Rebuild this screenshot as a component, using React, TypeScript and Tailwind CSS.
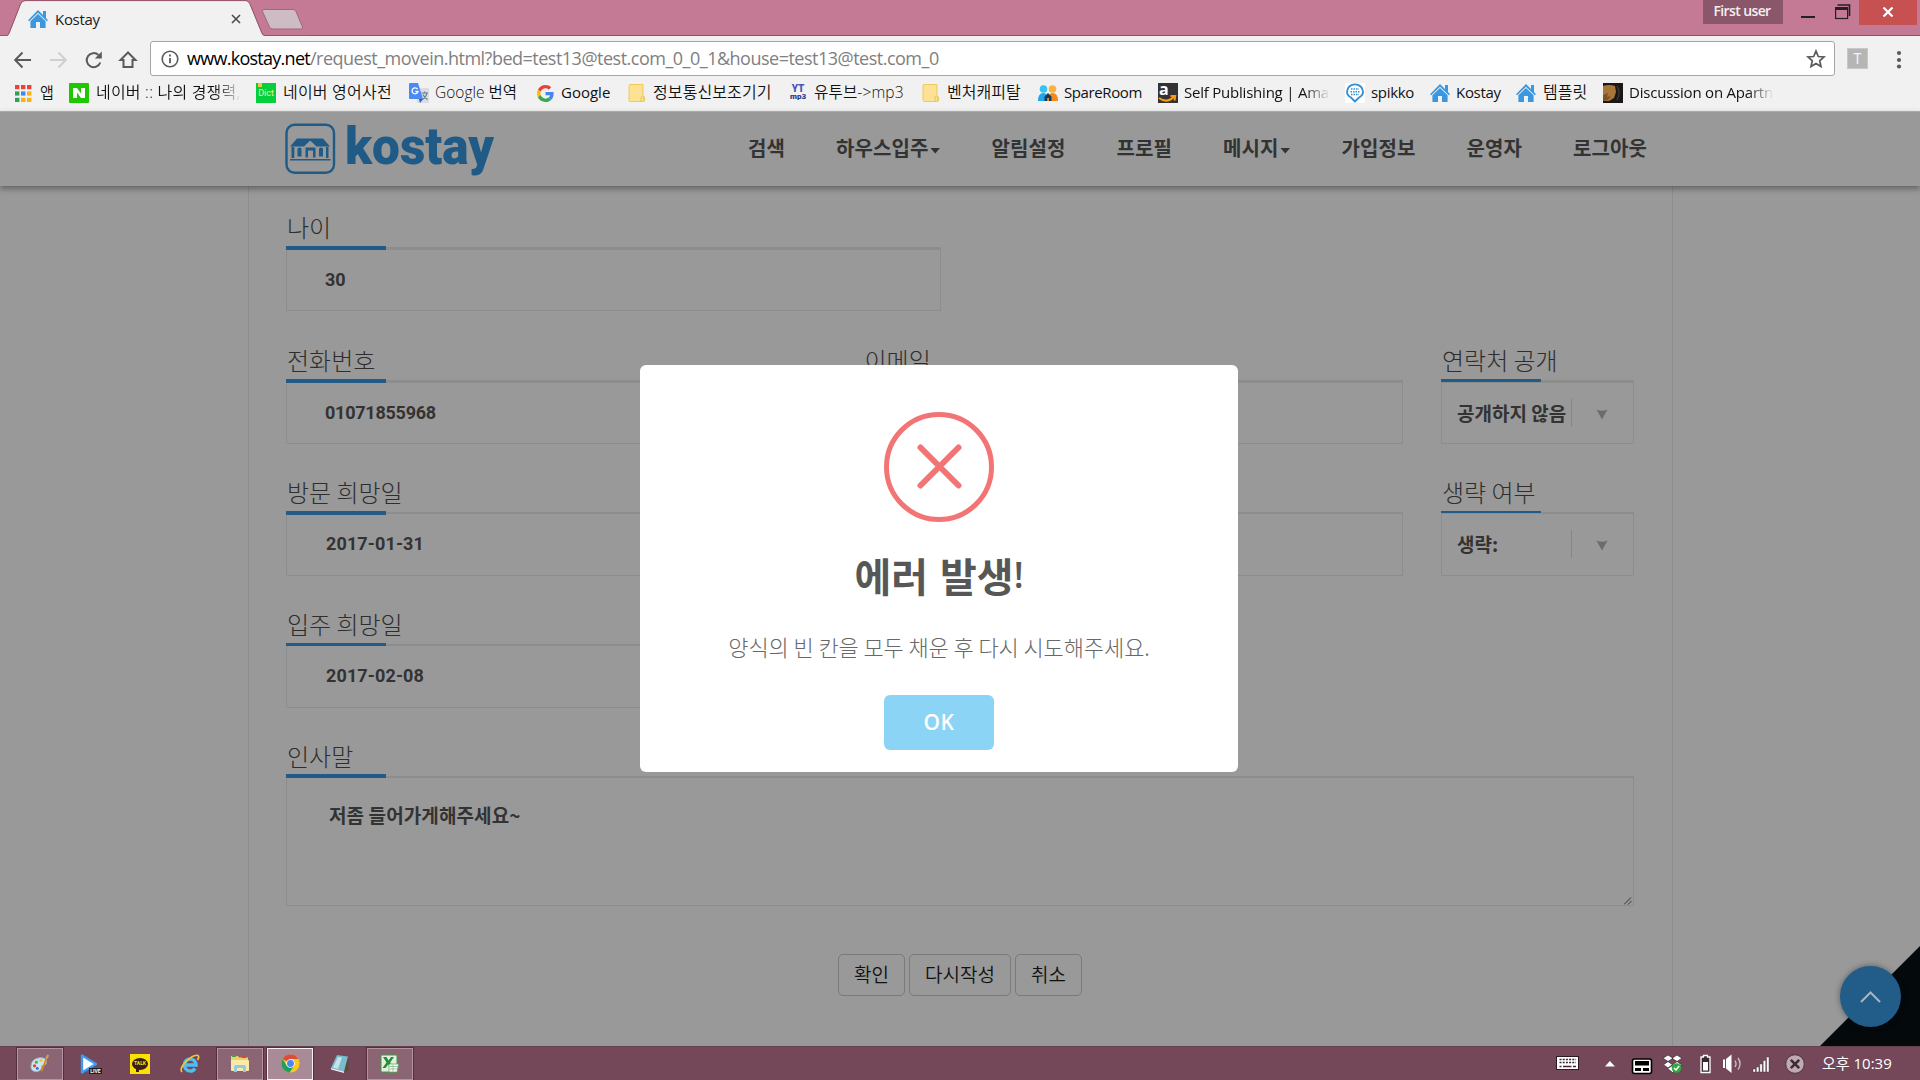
import type { ReactNode } from "react";

const LATIN = "font-['Open_Sans','Noto_Sans_CJK_KR',sans-serif]";
const KOREAN = "font-['Noto_Sans_CJK_KR',sans-serif]";

function House() {
  return (
    <svg width="20" height="18" viewBox="0 0 20 18" fill="#3b97e0" className="shrink-0">
      <path d="M10 0 L15 5 V1 H18 V8 L20 10.2 L18.8 11.2 L10 2.8 L1.2 11.2 L0 10.2 Z" />
      <path d="M10 4 L17.6 11.2 V18 H12 V12 H8 V18 H2.4 V11.2 Z" />
    </svg>
  );
}

function Folder() {
  return (
    <svg width="17" height="18" viewBox="0 0 17 18" className="shrink-0">
      <path d="M1 1.5 Q1 0.5 2 0.5 H15 V12 L16.5 13 V16.5 Q16.5 17.5 15 17.5 H2 Q1 17.5 1 16.5 Z" fill="#fde293" stroke="#efc95f" />
      <path d="M13 17 V13 Q15 11 16 13 V17" fill="#fbe08a" stroke="#e8bd4b" strokeWidth=".8" />
    </svg>
  );
}

function AppsIcon() {
  const c = ["#ea4335", "#ea4335", "#ea4335", "#34a056", "#4285f4", "#f9b213", "#34a056", "#f9b213", "#f9b213"];
  return (
    <svg width="17" height="17" className="shrink-0">
      {c.map((f, i) => (
        <rect key={i} x={(i % 3) * 6} y={Math.floor(i / 3) * 6.4} width="4.4" height="4.2" fill={f} />
      ))}
    </svg>
  );
}

function NaverIcon() {
  return (
    <svg width="20" height="20" className="shrink-0">
      <rect width="20" height="20" rx="1" fill="#1ec800" />
      <path d="M4 5 H8 L12 10.5 V5 H16 V15 H12 L8 9.5 V15 H4 Z" fill="#fff" />
    </svg>
  );
}

function DictIcon() {
  return (
    <span className="relative flex h-5 w-5 shrink-0 items-center justify-center bg-[#04cf3c] font-['Roboto'] text-[9px] leading-none text-[#e8f59a]">
      <i className="absolute left-[2px] top-0 h-1 w-1 bg-[#f5c43c]" />
      Dict
    </span>
  );
}

function TranslateIcon() {
  return (
    <svg width="20" height="20" viewBox="0 0 20 20" className="shrink-0">
      <rect x="8" y="5" width="12" height="15" rx="1" fill="#d9dce0" />
      <path d="M1 0 H9 L14 16 H1 Q0 16 0 15 V1 Q0 0 1 0 Z" fill="#4a8af4" />
      <path d="M10 16 H14 L11 20 Z" fill="#3256b5" />
      <path d="M8.500 6 A3 3 0 1 0 9 8.500 H6.300" fill="none" stroke="#fff" strokeWidth="1.3" />
      <path d="M12.500 10 H19 M15.700 8.500 V10 M18 10 Q17 14.500 13.500 16.500 M14 11.500 Q15.500 15 18.500 16.500" fill="none" stroke="#66788a" strokeWidth="1.1" />
    </svg>
  );
}

function GoogleIcon() {
  return (
    <svg width="17" height="17" viewBox="0 0 48 48" className="shrink-0">
      <path fill="#EA4335" d="M24 9.5c3.54 0 6.71 1.22 9.21 3.6l6.85-6.85C35.9 2.38 30.47 0 24 0 14.62 0 6.51 5.38 2.56 13.22l7.98 6.19C12.43 13.72 17.74 9.5 24 9.5z" />
      <path fill="#4285F4" d="M46.98 24.55c0-1.57-.15-3.09-.38-4.55H24v9.02h12.94c-.58 2.96-2.26 5.48-4.78 7.18l7.73 6c4.51-4.18 7.09-10.36 7.09-17.65z" />
      <path fill="#FBBC05" d="M10.53 28.59A14.5 14.5 0 0 1 9.77 24c0-1.6.27-3.14.76-4.59l-7.98-6.19A23.9 23.9 0 0 0 0 24c0 3.88.92 7.54 2.56 10.78l7.97-6.19z" />
      <path fill="#34A853" d="M24 48c6.48 0 11.93-2.13 15.89-5.81l-7.73-6c-2.15 1.45-4.92 2.3-8.16 2.3-6.26 0-11.57-4.22-13.47-9.91l-7.98 6.19C6.51 42.62 14.62 48 24 48z" />
    </svg>
  );
}

function YtIcon() {
  return (
    <span className="flex w-[18px] shrink-0 flex-col items-center font-['Roboto'] font-bold leading-[8px] text-[#4458b8]">
      <b className="text-[10px]">YT</b>
      <b className="text-[8px] text-[#2b3a8c]">mp3</b>
    </span>
  );
}

function PeopleIcon() {
  return (
    <svg width="20" height="16" viewBox="0 0 20 16" className="shrink-0">
      <circle cx="5.5" cy="4" r="3.8" fill="#35c3f3" />
      <path d="M0 16 Q0 8 5.500 8 Q10 8 10 16 Z" fill="#1fa7e6" />
      <circle cx="14.5" cy="4" r="3.8" fill="#fbb040" />
      <path d="M10 16 Q10 8 14.500 8 Q20 8 20 16 Z" fill="#f08a1c" />
      <path d="M6.500 16 V11.500 L10 8 L13.500 11.500 V16 H11 V13 H9 V16 Z" fill="#123c66" />
    </svg>
  );
}

function AmazonIcon() {
  return (
    <span className="relative flex h-5 w-5 shrink-0 items-start justify-start bg-[#333] pl-[1px] font-['Open_Sans'] text-[16px] font-bold leading-[12px] text-white">
      a
      <svg width="20" height="20" className="absolute left-0 top-0">
        <path d="M1 15 Q9 21 16 13.500 M12.500 13 H17.200 L16.500 17.500" fill="none" stroke="#f79a1c" strokeWidth="2" />
      </svg>
    </span>
  );
}

function SpikkoIcon() {
  return (
    <svg width="20" height="20" className="shrink-0">
      <rect width="20" height="20" fill="#fff" />
      <path d="M10 18.500 L6 14.500 Q2 12.500 2 8.700 A8 7.400 0 0 1 18 8.700 Q18 12.500 14 14.500 Z" fill="#fff" stroke="#2f8fd0" strokeWidth="1.8" />
      <path d="M6 6 H14 M5.500 8.700 H14.500 M6 11.400 H14" stroke="#2f8fd0" strokeWidth="1.5" strokeDasharray="1.5 1" />
    </svg>
  );
}

function DiscussionIcon() {
  return (
    <svg width="20" height="20" className="shrink-0">
      <rect width="20" height="20" fill="#1b1715" />
      <path d="M0 3 Q6 1 12 3 L13 9 L11 15 L6 18 H0 Z" fill="#a87638" />
      <path d="M0 12 L5 10 L4 14 L8 13 L5 17 L0 18 Z" fill="#7d5224" />
      <path d="M14 3 Q18 9 14 17" fill="none" stroke="#3c3836" strokeWidth="1.5" />
    </svg>
  );
}

const FADE = "[mask-image:linear-gradient(to_right,#000_82%,transparent)]";

const bookmarks: { icon: ReactNode; label: string; cls: string; box: string; gap: string }[] = [
  { icon: <AppsIcon />, label: "앱", cls: "text-[15px] font-[350]", box: "w-[54px]", gap: "gap-[8px]" },
  { icon: <NaverIcon />, label: "네이버 :: 나의 경쟁력,", cls: `text-[16px] font-[350] tracking-[0.2px] w-[146px] overflow-hidden ${FADE}`, box: "w-[187px]", gap: "gap-[7px]" },
  { icon: <DictIcon />, label: "네이버 영어사전", cls: "text-[16px] font-[350] tracking-[0.2px]", box: "w-[153px]", gap: "gap-[7px]" },
  { icon: <TranslateIcon />, label: "Google 번역", cls: "text-[15.5px] font-[350]", box: "w-[128px]", gap: "gap-[6px]" },
  { icon: <GoogleIcon />, label: "Google", cls: "text-[15px]", box: "w-[91px]", gap: "gap-[7px]" },
  { icon: <Folder />, label: "정보통신보조기기", cls: "text-[16px] font-[350] tracking-[0.1px]", box: "w-[161px]", gap: "gap-[8px]" },
  { icon: <YtIcon />, label: "유투브->mp3", cls: "text-[15.6px] font-[350] tracking-[0.1px]", box: "w-[133px]", gap: "gap-[7px]" },
  { icon: <Folder />, label: "벤처캐피탈", cls: "text-[16px] font-[350]", box: "w-[116px]", gap: "gap-[8px]" },
  { icon: <PeopleIcon />, label: "SpareRoom", cls: "text-[15px] tracking-[-0.39px]", box: "w-[120px]", gap: "gap-[6px]" },
  { icon: <AmazonIcon />, label: "Self Publishing | Ama", cls: `text-[15px] tracking-[-0.22px] w-[146px] overflow-hidden ${FADE}`, box: "w-[187px]", gap: "gap-[6px]" },
  { icon: <SpikkoIcon />, label: "spikko", cls: "text-[15px] tracking-[-0.32px]", box: "w-[85px]", gap: "gap-[6px]" },
  { icon: <House />, label: "Kostay", cls: "text-[15px] tracking-[-0.3px]", box: "w-[86px]", gap: "gap-[6px]" },
  { icon: <House />, label: "템플릿", cls: "text-[16px] font-[350]", box: "w-[87px]", gap: "gap-[7px]" },
  { icon: <DiscussionIcon />, label: "Discussion on Apartn", cls: `text-[15px] tracking-[-0.21px] w-[145px] overflow-hidden ${FADE}`, box: "w-[171px]", gap: "gap-[6px]" },
];

function TitleBar() {
  return (
    <div className="flex h-9 items-start bg-[#c47a95] shadow-[inset_0_-1px_0_#8b5068]">
      <div className="relative h-9 w-[310px]">
        <svg width="310" height="36" className="absolute left-0 top-0">
          <path d="M7 36 Q9 35 10 32 L21 4 Q22.500 1 25 1 H246 Q248.500 1 249.500 4 L261 32 Q262 35.500 265 36 Z" fill="#f1f1f1" />
          <path d="M0 35.500 H7 Q8.500 35 9.500 32 L20.500 4 Q22 .6 25 .6 H246 Q248.500 .6 250 4 L261.500 32 Q262.500 35.500 265 35.500 H310" fill="none" stroke="#93566e" />
          <path d="M264 9.500 H293 Q295 9.500 296 11.500 L302.500 27 Q303 29 301 29 H273 Q270.500 29 269.500 27 L262.500 11.500 Q262 9.500 264 9.500 Z" fill="#cdbcc4" stroke="#a3667f" />
        </svg>
        <div className="relative flex h-9 items-center pb-[2px] pl-7 pt-[3px]">
          <House />
          <span className={`ml-[7px] w-[176px] text-[15px] leading-[22px] tracking-[-0.3px] text-[#1c1c1c] ${LATIN}`}>Kostay</span>
          <svg width="10" height="10">
            <path d="M1 1 L9 9 M9 1 L1 9" stroke="#4a4a4a" strokeWidth="1.6" />
          </svg>
        </div>
      </div>
      <div className="flex-1" />
      <div className={`flex h-6 w-20 items-center justify-center bg-[#8a576a] pb-[3px] pr-[2px] text-[14px] font-semibold leading-[20px] tracking-[-0.62px] text-[#f5eef1] ${LATIN}`}>First user</div>
      <svg width="76" height="26">
        <rect x="18" y="16" width="14" height="2" fill="#222" />
        <path d="M54.500 5 H66.500 V16" fill="none" stroke="#222" strokeWidth="1.600" />
        <rect x="52.600" y="8" width="12" height="10.500" fill="none" stroke="#222" strokeWidth="1.200" />
        <rect x="52" y="7" width="13" height="3" fill="#222" />
      </svg>
      <div className="mr-[3px] flex h-[25px] w-[58px] items-center justify-center bg-[#c75050] pb-[2px]">
        <svg width="12" height="10">
          <path d="M1.500 .5 L10.500 9.500 M10.500 .5 L1.500 9.500" stroke="#fff" strokeWidth="2.200" />
        </svg>
      </div>
    </div>
  );
}

function Toolbar() {
  return (
    <div className="flex h-[46px] items-center bg-[#f1f1f1] pb-[1px]">
      <svg width="150" height="34" fill="none" stroke="#5a5a5a" strokeWidth="2" className="shrink-0">
        <path d="M31 18 H16 M22.500 10.500 L15.200 18 L22.500 25.500" />
        <path d="M50 18 H65 M58.500 10.500 L65.800 18 L58.500 25.500" stroke="#cfcfcf" />
        <path d="M100.300 20.500 A7 7 0 1 1 98.500 13" />
        <path d="M101.800 9.500 V16.500 H94.800 Z" fill="#5a5a5a" stroke="none" />
        <path d="M128 10.500 L120.500 18 H123.500 V25 H132.500 V18 H135.500 Z" />
      </svg>
      <div className="flex h-[35px] w-[1685px] shrink-0 items-center rounded-[3px] border border-[#a6a6a6] bg-white pl-[10px]">
        <svg width="18" height="18" fill="none" stroke="#5a5a5a" strokeWidth="1.600" className="shrink-0">
          <circle cx="9" cy="9" r="7.800" />
          <path d="M9 8 V13.200 M9 4.600 V6.400" strokeWidth="1.800" />
        </svg>
        <div className={`ml-[8px] flex-1 whitespace-nowrap pb-[1px] text-[18px] leading-[30px] text-[#808080] ${LATIN}`}>
          <span className="tracking-[-0.73px] text-black">www.kostay.net</span>
          <span className="tracking-[-0.5px]">/request_movein.html?bed=test13@test.com_0_0_1&amp;house=test13@test.com_0</span>
        </div>
        <svg width="20" height="20" viewBox="0 0 20 20" fill="none" stroke="#5a5a5a" strokeWidth="1.700" className="mr-[8px]">
          <path d="M10 2 L12.300 7.500 L18 8 L13.700 11.800 L15 17.500 L10 14.500 L5 17.500 L6.300 11.800 L2 8 L7.700 7.500 Z" />
        </svg>
      </div>
      <div className="ml-[12px] flex h-[21px] w-[21px] items-center justify-center border border-[#c8c8c8] bg-[#b5b5b5] font-['Roboto'] text-[14px] leading-none text-[#f4f4f4]">T</div>
      <svg width="6" height="20" className="ml-[28px] mt-[2px]" fill="#5a5a5a">
        <circle cx="3" cy="3" r="2.100" />
        <circle cx="3" cy="10" r="2.100" />
        <circle cx="3" cy="16.500" r="2.100" />
      </svg>
    </div>
  );
}

function Bookmarks() {
  return (
    <div className="flex h-[29px] items-center bg-[#f1f1f1] pb-[7px] pl-[15px]">
      {bookmarks.map((b, i) => (
        <div key={i} className={`flex h-[22px] shrink-0 items-center ${b.gap} ${b.box}`}>
          {b.icon}
          <span className={`mb-[2px] whitespace-nowrap leading-[22px] text-[#111] ${LATIN} ${b.cls}`}>{b.label}</span>
        </div>
      ))}
    </div>
  );
}

function Logo() {
  return (
    <svg width="212" height="52" viewBox="0 0 212 52" fill="#205b87" className="overflow-visible">
      <rect x="1.500" y="1.800" width="47.500" height="48" rx="8" fill="none" stroke="#205b87" strokeWidth="2.400" />
      <path d="M12 15.500 H38 L45 23.500 H31.500 L25.200 17.500 L19 23.500 H5 Z" />
      <path d="M6.500 24 H9.300 V35 H6.500 Z M41 24 H43.500 V35 H41 Z M5 36 H45.500 V37.500 H5 Z" />
      <path d="M12.500 25.500 Q14.500 23.500 16.500 25.500 V33.500 H12.500 Z M34 25.500 Q36 23.500 38 25.500 V33.500 H34 Z" />
      <path d="M20.500 34.500 V24.500 H30.500 V34.500 H28 V27.500 H23 V34.500 Z" />
      <text x="60" y="41" textLength="149" lengthAdjust="spacingAndGlyphs" className="font-['Roboto'] text-[52px] font-black">kostay</text>
    </svg>
  );
}

function Caret() {
  return (
    <svg width="11" height="6" className="ml-[1px] mt-[6px]">
      <path d="M.5 0 H10 L5.250 5.500 Z" fill="#333" />
    </svg>
  );
}

function Header() {
  const items = ["검색", "하우스입주", "알림설정", "프로필", "메시지", "가입정보", "운영자", "로그아웃"];
  return (
    <header className="relative z-10 flex h-[75px] shrink-0 items-start border-t border-[#a9a9a9] bg-[#999] pl-[285px] pt-[11px] shadow-[0_3px_6px_rgba(0,0,0,0.35)]">
      <Logo />
      <nav className={`ml-[251px] mt-[10px] flex h-[30px] items-center gap-[51px] text-[20px] font-bold leading-[30px] tracking-[0.1px] text-[#333] ${KOREAN}`}>
        {items.map((t) => (
          <span key={t} className="flex items-center whitespace-nowrap">
            {t}
            {(t === "하우스입주" || t === "메시지") && <Caret />}
          </span>
        ))}
      </nav>
    </header>
  );
}

function Field({ label, box, bar = "h-1", children }: { label: string; box: string; bar?: string; children?: ReactNode }) {
  return (
    <div>
      <div className={`h-8 pl-[1px] text-[24px] font-light leading-[24px] text-[#2e2e2e] ${KOREAN}`}>{label}</div>
      <div className={`relative border border-[#8d8d8d] ${box}`}>
        <div className={`absolute -left-px w-[100px] bg-[#225b87] ${bar}`} />
        {children}
      </div>
    </div>
  );
}

const VALUE = "text-[18px] font-bold leading-[24px] text-[#333] font-['Roboto','Noto_Sans_CJK_KR',sans-serif]";
const TALL = "h-16 border-t-3";
const SLIM = "h-16 border-t-2";

function SelectValue({ text }: { text: string }) {
  return (
    <div className="flex h-[60px] items-center pl-[15px]">
      <span className={`w-[114px] whitespace-nowrap pb-[1px] text-[19px] font-bold leading-[28px] text-[#333] ${KOREAN}`}>{text}</span>
      <span className="h-7 w-px bg-[#868686]" />
      <svg width="12" height="11" className="ml-[24px] mt-[3px]">
        <path d="M.5 .5 Q6 3 11.500 .5 L6 10.500 Z" fill="#6c6c6c" />
      </svg>
    </div>
  );
}

function ActionButton({ text, w }: { text: string; w: string }) {
  return (
    <button className={`h-[42px] rounded-[5px] border border-[#7a7a7a] pb-[1px] text-[19px] font-[350] text-[#111] ${KOREAN} ${w}`}>{text}</button>
  );
}

function FormPage() {
  return (
    <main className="flex-1 bg-[#999]">
      <div className="ml-[248px] h-full w-[1425px] border-x border-[#8d8d8d] pl-[37px] pt-[29px]">
        <Field label="나이" box={`w-[655px] ${TALL}`} bar="-top-1 h-1">
          <div className={`pl-[38px] pt-[18px] ${VALUE}`}>30</div>
        </Field>
        <div className="mt-[37px] flex gap-[38px]">
          <Field label="전화번호" box={`w-[539.500px] ${TALL}`} bar="-top-1 h-1">
            <div className={`pl-[38px] pt-[18px] tracking-[-0.24px] ${VALUE}`}>01071855968</div>
          </Field>
          <Field label="이메일" box={`w-[539.500px] ${TALL}`} bar="-top-1 h-1" />
          <Field label="연락처 공개" box={`w-[193px] ${TALL}`} bar="-top-1 h-[3px]">
            <SelectValue text="공개하지 않음" />
          </Field>
        </div>
        <div className="mt-9 flex gap-[38px]">
          <Field label="방문 희망일" box={`w-[539.500px] ${SLIM}`} bar="-top-[3px] h-1">
            <div className={`pl-[39px] pt-[18px] tracking-[0.12px] ${VALUE}`}>2017-01-31</div>
          </Field>
          <Field label="방문 시간" box={`w-[539.500px] ${SLIM}`} bar="-top-[3px] h-1" />
          <Field label="생략 여부" box={`w-[193px] ${SLIM}`} bar="-top-[3px] h-[2px]">
            <SelectValue text="생략:" />
          </Field>
        </div>
        <div className="mt-9 w-[539px]">
          <Field label="입주 희망일" box={SLIM} bar="-top-[3px] h-[3px]">
            <div className={`pl-[39px] pt-[18px] tracking-[0.12px] ${VALUE}`}>2017-02-08</div>
          </Field>
        </div>
        <div className="mt-9">
          <Field label="인사말" box="h-[130px] w-[1348px] border-t-2" bar="-top-1 h-1">
            <div className={`pl-[42px] pt-[23px] text-[19px] font-bold leading-[28px] tracking-[0.1px] text-[#333] ${KOREAN}`}>저좀 들어가게해주세요~</div>
            <svg width="8" height="8" className="absolute bottom-0 right-[1px]">
              <path d="M0 7.500 L7 .5 M4 7.500 L7.500 4" stroke="#333" strokeWidth="1" />
            </svg>
          </Field>
        </div>
        <div className="ml-[552px] mt-12 flex gap-1">
          <ActionButton text="확인" w="w-[67px]" />
          <ActionButton text="다시작성" w="w-[102px]" />
          <ActionButton text="취소" w="w-[67px]" />
        </div>
      </div>
    </main>
  );
}

function Modal() {
  return (
    <div className="absolute left-[640px] top-[365px] z-20 flex h-[407px] w-[598px] flex-col items-center rounded-[6px] bg-white pt-[47px]">
      <svg width="110" height="110" fill="none" stroke="#f27474" strokeWidth="5">
        <circle cx="55" cy="55" r="52.500" />
        <path d="M36.500 35.500 L74.500 73.500 M74.500 35.500 L36.500 73.500" strokeWidth="6" strokeLinecap="round" />
      </svg>
      <h2 className={`mt-[28px] flex text-[40px] font-bold leading-[50px] text-[#575757] ${KOREAN}`}>
        <span className="[word-spacing:3px]">에러 발생</span>
        <span className="font-['Open_Sans'] text-[36px] font-semibold">!</span>
      </h2>
      <p className={`mt-[31px] whitespace-nowrap text-[22px] font-light leading-[30px] tracking-[-0.1px] text-[#686868] ${KOREAN}`}>
        양식의 빈 칸을 모두 채운 후 다시 시도해주세요.
      </p>
      <button className={`mt-[34px] h-[55px] w-[110px] rounded-[6px] bg-[#8cd4f5] text-[21px] font-semibold tracking-[0.5px] text-white ${LATIN}`}>OK</button>
    </div>
  );
}

function CornerTop() {
  return (
    <div className="absolute left-[1820px] top-[946px] h-[100px] w-[100px]">
      <svg width="100" height="100" className="absolute left-0 top-0">
        <path d="M0 100 L100 0 V100 Z" fill="#04090c" />
      </svg>
      <div className="absolute left-5 top-5 flex h-[61px] w-[61px] items-center justify-center rounded-full bg-[#225c88] shadow-[0_0_6px_rgba(0,0,0,0.4)]">
        <svg width="21" height="12" fill="none" stroke="#b0b4b7" strokeWidth="2">
          <path d="M1 11 L10.500 1.500 L20 11" />
        </svg>
      </div>
    </div>
  );
}

function TaskButton({ children, state = "idle" }: { children: ReactNode; state?: "idle" | "open" | "active" }) {
  const look = {
    idle: "border-transparent",
    open: "border-[#b294a1] bg-[#8b6574] outline outline-[#54303e]",
    active: "border-[#f6f0f3] bg-[#a98a97] outline outline-[#54303e]",
  }[state];
  return <div className={`flex h-8 w-[46px] items-center justify-center border ${look}`}>{children}</div>;
}

function Taskbar() {
  return (
    <footer className="relative z-10 flex h-[34px] shrink-0 items-center border-t border-[#65404e] bg-[#744858] pl-[17px]">
      <div className="flex gap-1">
        <TaskButton state="open">
          <svg width="20" height="20" viewBox="0 0 22 20">
            <path d="M1 13 Q1 4 11 3 Q19 3 18 9 Q17 12 13 12 Q13 18 7 18.500 Q1 18 1 13 Z" fill="#cfe4f1" stroke="#8fb3c9" />
            <circle cx="5" cy="12" r="1.800" fill="#d9453b" />
            <circle cx="7" cy="8" r="1.800" fill="#5bb14c" />
            <circle cx="12" cy="6" r="1.800" fill="#f0c430" />
            <circle cx="8" cy="15" r="1.600" fill="#3a6fd0" />
            <path d="M18.500 3 L12.500 18" stroke="#d98628" strokeWidth="2" />
            <path d="M20 0 L18 4" stroke="#c79a6a" strokeWidth="2.600" />
          </svg>
        </TaskButton>
        <TaskButton>
          <div className="relative h-5 w-[21px]">
            <svg width="18" height="20">
              <path d="M2 1.500 L16 10 L2 18.500 Z" fill="#fff" stroke="#3b9bf0" strokeWidth="2.400" strokeLinejoin="round" />
            </svg>
            <span className="absolute -right-[1px] bottom-0 bg-[#222] px-[1px] font-['Roboto'] text-[5px] font-bold leading-[6px] text-white">LIVE</span>
          </div>
        </TaskButton>
        <TaskButton>
          <div className="flex h-5 w-5 items-center justify-center bg-[#fae100]">
            <div className="relative flex h-3 w-4 items-center justify-center rounded-[50%] bg-[#3b1e1e] font-['Roboto'] text-[5px] font-bold leading-none text-[#fae100]">
              <i className="absolute -bottom-[2px] left-1 h-1 w-[3px] bg-[#3b1e1e]" />
              TALK
            </div>
          </div>
        </TaskButton>
        <TaskButton>
          <svg width="20" height="20" viewBox="0 0 20 20" fill="none">
            <path d="M4.500 11 H16 A5.800 6 0 1 0 15 14.500" stroke="#4cc0f2" strokeWidth="3.400" />
            <path d="M2 18 Q-1 15 6 7.500 Q14 0 18 1.500 Q19.500 3 17.500 6" stroke="#f4c43a" strokeWidth="1.700" />
          </svg>
        </TaskButton>
        <TaskButton state="open">
          <svg width="20" height="19">
            <path d="M1 2 H8 L9 3.500 H18 V16 H1 Z" fill="#f0cf6a" />
            <rect x="2" y="1" width="4" height="2" fill="#3ea24b" />
            <rect x="12" y="2" width="4" height="2" fill="#d9453b" />
            <rect x="1" y="6" width="18" height="11" rx="1" fill="#fbeaa6" />
            <path d="M4 18 V12.500 Q4 11 6 11 H14 Q16 11 16 12.500 V18 H13 V14 H7 V18 Z" fill="#8fcbea" />
          </svg>
        </TaskButton>
        <TaskButton state="active">
          <svg width="19" height="19" viewBox="0 0 48 48">
            <circle cx="24" cy="24" r="23" fill="#fbc91d" />
            <path d="M24 24 L4.100 12.500 A23 23 0 0 1 43.900 12.500 H24 Z" fill="#dd4b3e" />
            <path d="M4.100 12.500 A23 23 0 0 0 22 47 L33 29.500 L24 24 L14 29 Z" fill="#1da05d" />
            <circle cx="24" cy="24" r="11" fill="#fff" />
            <circle cx="24" cy="24" r="8.700" fill="#4688f1" />
          </svg>
        </TaskButton>
        <TaskButton>
          <svg width="20" height="19">
            <path d="M6 1 L18 2 L19 16 L16 18 Z" fill="#5b4a3c" />
            <path d="M7 1 L18 2.500 L14 17.500 L1 14 Z" fill="#79bccb" />
            <path d="M8 3 L12 3.500 L8 15 L3 13.500 Z" fill="#c3e3ea" />
            <path d="M1 14 L14 17.500 L14 19 L1 15.500 Z" fill="#e8eef0" />
          </svg>
        </TaskButton>
        <TaskButton state="open">
          <svg width="20" height="19">
            <rect x="1" y="1" width="16" height="17" rx="1" fill="#e2f1df" stroke="#3f9a45" />
            <path d="M3 3 H6.500 L8.500 6.500 L11 3 H14 L10.200 8.500 L14 14 H10.500 L8.200 10.500 L5.500 14 H2.500 L6.500 8.500 Z" fill="#2c8a35" />
            <path d="M9 10 H18.500 L17 18 H9 Z" fill="#fff" stroke="#5daa62" strokeWidth=".8" />
            <path d="M10 12.500 H17.500 M10 15 H17 M13 10.500 V17.500" stroke="#7dbb80" strokeWidth=".8" />
          </svg>
        </TaskButton>
      </div>
      <div className="flex-1" />
      <svg width="266" height="33" className="mr-[2px]">
        <g transform="translate(2.500,-.5)">
          <rect x="0" y="10" width="22" height="13" fill="#fff" stroke="#2b1a20" />
          <path d="M3 13 H19.500 M3 16 H19.500" stroke="#3a2630" strokeWidth="1.600" strokeDasharray="2 1.200" />
          <path d="M3 20 H5 M6.500 20 H15 M16.500 20 H19.500" stroke="#3a2630" strokeWidth="1.600" />
        </g>
        <path d="M51 19.500 L55.800 14 L61 19.500 Z" fill="#fff" />
        <rect x="78.500" y="12" width="19" height="14.500" rx="2" fill="#fff" stroke="#000" strokeWidth="1.600" />
        <path d="M81 14 H95 V18.500 H81 Z M81 21 H87 V24 H81 Z M89 21 H95 V24 H89 Z" fill="#000" />
        <g fill="#fff" stroke="#3a2630" strokeWidth=".7">
          <path d="M114 8 L119 11.200 L114 14.500 L109 11.200 Z M123 8 L128 11.200 L123 14.500 L118 11.200 Z M114 14.500 L118.500 17.700 L114 21 L109.500 17.700 Z M123 14.500 L127.500 17.700 L123 21 L118.500 17.700 Z M113.500 21.500 L118.500 18.500 L123 21.500 L118.500 25.500 Z" />
        </g>
        <circle cx="122.500" cy="21" r="4.800" fill="#2faa3c" />
        <path d="M120 21 L122 23 L125.200 19" fill="none" stroke="#fff" strokeWidth="1.500" />
        <path d="M149.500 8.500 H153.500 V10 H156 V25.500 H147 V10 H149.500 Z" fill="#3a2630" stroke="#fff" strokeWidth="1.300" />
        <rect x="149" y="15" width="5" height="8.500" fill="#fff" />
        <path d="M169 12.500 H171 V21 H169 Z M172 12 L177.500 7.500 V26 L172 21.500 Z" fill="#fff" />
        <path d="M181 13.500 Q183 16.700 181 20 M184 11 Q188 16.700 184 22.500" fill="none" stroke="#cdb9c1" strokeWidth="1.400" />
        <path d="M199 22 H201.500 V25 H199 Z M202.400 20 H204.900 V25 H202.400 Z M205.800 17 H208.300 V25 H205.800 Z M209.200 13.500 H211.700 V25 H209.200 Z M212.600 10 H215 V25 H212.600 Z" fill="#fff" stroke="#3a2630" strokeWidth=".4" />
        <circle cx="241" cy="17" r="9.300" fill="#bfa9b2" stroke="#4b323c" />
        <path d="M236.800 12.800 L245.200 21.200 M245.200 12.800 L236.800 21.200" stroke="#3e2a32" strokeWidth="2.600" />
      </svg>
      <span className={`mr-[28px] w-[70px] whitespace-nowrap text-[15px] leading-[33px] text-white ${LATIN}`}>오후 10:39</span>
    </footer>
  );
}

export default function App() {
  return (
    <div className="relative flex h-[1080px] w-[1920px] flex-col overflow-hidden bg-[#999]">
      <TitleBar />
      <Toolbar />
      <Bookmarks />
      <Header />
      <FormPage />
      <CornerTop />
      <Modal />
      <Taskbar />
    </div>
  );
}
